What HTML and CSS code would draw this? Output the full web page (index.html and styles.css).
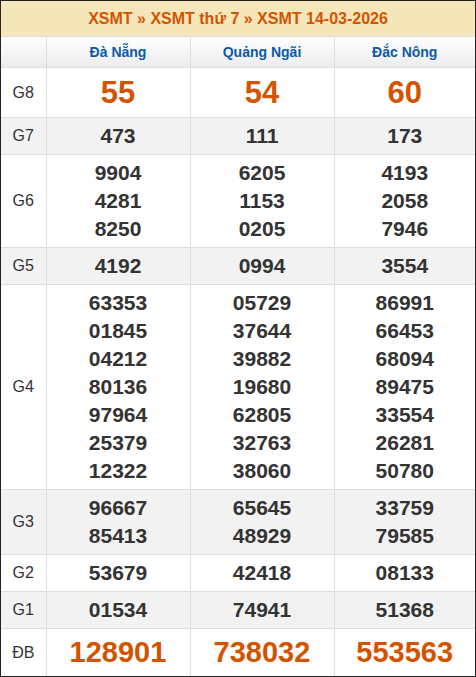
FILE: index.html
```html
<!DOCTYPE html>
<html lang="vi">
<head>
<meta charset="utf-8">
<link rel="stylesheet" href="styles.css">
</head>
<body>
<div class="box">
  <div class="title"><span>XSMT</span> » <span>XSMT thứ 7</span> » <span>XSMT 14-03-2026</span></div>
  <table class="kq">
    <colgroup><col class="c-label"><col class="c-prov"><col class="c-prov"><col class="c-last"></colgroup>
    <thead>
      <tr class="prov"><th></th><th>Đà Nẵng</th><th>Quảng Ngãi</th><th>Đắc Nông</th></tr>
    </thead>
    <tbody>
      <tr class="g8"><td class="lbl">G8</td><td>55</td><td>54</td><td>60</td></tr>
      <tr class="alt"><td class="lbl">G7</td><td>473</td><td>111</td><td>173</td></tr>
      <tr><td class="lbl">G6</td><td>9904<br>4281<br>8250</td><td>6205<br>1153<br>0205</td><td>4193<br>2058<br>7946</td></tr>
      <tr class="alt"><td class="lbl">G5</td><td>4192</td><td>0994</td><td>3554</td></tr>
      <tr><td class="lbl">G4</td><td>63353<br>01845<br>04212<br>80136<br>97964<br>25379<br>12322</td><td>05729<br>37644<br>39882<br>19680<br>62805<br>32763<br>38060</td><td>86991<br>66453<br>68094<br>89475<br>33554<br>26281<br>50780</td></tr>
      <tr class="alt"><td class="lbl">G3</td><td>96667<br>85413</td><td>65645<br>48929</td><td>33759<br>79585</td></tr>
      <tr><td class="lbl">G2</td><td>53679</td><td>42418</td><td>08133</td></tr>
      <tr class="alt"><td class="lbl">G1</td><td>01534</td><td>74941</td><td>51368</td></tr>
      <tr class="db"><td class="lbl">ĐB</td><td>128901</td><td>738032</td><td>553563</td></tr>
    </tbody>
  </table>
</div>
</body>
</html>
```

FILE: styles.css
```css
html, body {
  margin: 0;
  padding: 0;
  background: #fff;
}
body {
  font-family: "Liberation Sans", Arial, sans-serif;
  color: #333;
}
.box {
  width: 476px;
  box-sizing: border-box;
  border: 1px solid #222;
}
.title {
  background: #f6e7bb;
  color: #d35400;
  font-weight: bold;
  font-size: 16px;
  height: 35px;
  line-height: 35px;
  text-align: center;
  border-bottom: 1px solid #dedede;
}
.kq {
  width: 474px;
  border-collapse: collapse;
  table-layout: fixed;
  border-style: hidden;
}
.c-label { width: 45px; }
.c-prov { width: 144px; }
.c-last { width: 141px; }
.kq th, .kq td {
  border: 1px solid #dedede;
  text-align: center;
  padding: 0;
}
.prov th {
  height: 30px;
  line-height: 30px;
  font-size: 14px;
  font-weight: bold;
  color: #0b5aa9;
  background: linear-gradient(#ffffff, #ececec);
}
.kq td {
  font-size: 21px;
  font-weight: bold;
  line-height: 28px;
  padding: 4px 0;
  color: #333;
}
.kq td.lbl {
  font-size: 16px;
  font-weight: normal;
  color: #333;
}
.alt td {
  background: #f2f2f2;
}
.g8 td {
  font-size: 31px;
  line-height: 41px;
  color: #d35400;
}
.db td {
  font-size: 29px;
  line-height: 39px;
  color: #d35400;
}
.g8 td.lbl, .db td.lbl {
  color: #333;
}
```
